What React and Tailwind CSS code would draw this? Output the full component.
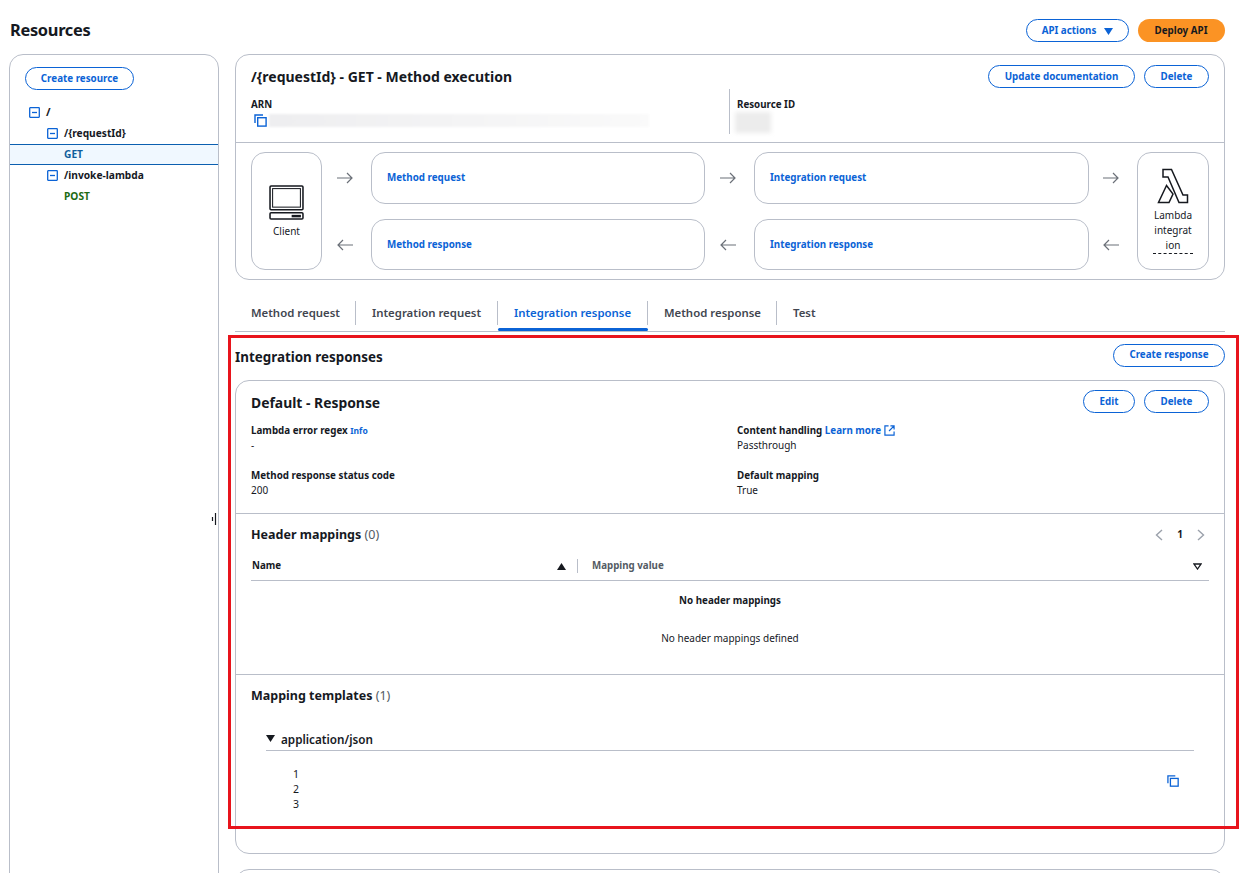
import React from 'react';

const CopyIcon = ({ className }) => (
  <svg viewBox="0 0 13 13" className={className} fill="none" stroke="#0b63d6" strokeWidth="1.4">
    <rect x="3.7" y="3.7" width="8.4" height="8.4" fill="#fff" />
    <path d="M1 9V1h8" />
  </svg>
);

const MinusBox = () => (
  <svg viewBox="0 0 11 11" className="w-[11px] h-[11px] shrink-0" fill="none" stroke="#0b63d6" strokeWidth="1.3">
    <rect x="0.7" y="0.7" width="9.6" height="9.6" rx="0.5" />
    <path d="M3 5.5h5" />
  </svg>
);

const Arrow = ({ left }) => (
  <div className="flex items-center justify-center pr-[4px]">
    <svg viewBox="0 0 16 12" className={'w-[16px] h-[12px] ' + (left ? 'rotate-180' : '')} fill="none" stroke="#6b7078" strokeWidth="1.2">
      <path d="M0 6h15M10 1l5 5-5 5" />
    </svg>
  </div>
);

const Btn = ({ children, className = '' }) => (
  <button className={'h-[23px] pt-px rounded-full border border-[#0b63d6] bg-white text-[#0b63d6] text-[9.8px] font-bold flex items-center justify-center ' + className}>
    {children}
  </button>
);

const Tile = ({ children, className = '' }) => (
  <div className={'rounded-[14px] border border-[#b9bec9] flex items-center pl-[15px] text-[9.8px] font-bold text-[#0b63d6] ' + className}>
    {children}
  </div>
);

const Tab = ({ children, width, active, last }) => (
  <div className={'relative h-[24px] flex items-center pl-[16px] text-[11.4px] font-semibold ' + width + ' ' + (active ? 'text-[#0b63d6]' : 'text-[#424650]')}>
    {children}
    {!last && <span className="absolute right-0 top-0 bottom-0 w-px bg-[#b9bec9]" />}
    {active && <span className="absolute left-0 right-0 -bottom-[6px] h-[3px] rounded-full bg-[#0b63d6]" />}
  </div>
);

const Field = ({ label, value, extra }) => (
  <div className="h-[30px] text-[10px] leading-[15px]">
    <div className="text-[9.8px] font-bold text-[#16191f]">{label} {extra}</div>
    <div className="text-[#16191f]">{value}</div>
  </div>
);

export default function App() {
  return (
    <div className="relative w-[1252px] h-[873px] overflow-hidden bg-white pl-[9px] pr-[27px] font-['Noto_Sans',sans-serif] text-[#16191f]">
      <div className="flex items-center justify-between h-[54px] pb-[6px] pt-[13px]">
        <h1 className="pl-px text-[16.4px] font-bold tracking-[-0.3px]">Resources</h1>
        <div className="flex gap-[9px]">
          <Btn className="w-[103px] gap-[8px]">
            API actions
            <svg viewBox="0 0 9 7" className="w-[9px] h-[7px]"><path d="M0 0h9L4.5 7z" fill="#0b63d6" /></svg>
          </Btn>
          <button className="w-[87px] h-[23px] pt-px pr-px rounded-full bg-[#fb9324] text-[9.8px] font-bold text-[#16191f]">Deploy API</button>
        </div>
      </div>

      <div className="flex gap-[16px] items-start">
        <aside className="relative w-[210px] h-[840px] rounded-[14px] border border-[#b9bec9] pt-[12px]">
          <Btn className="ml-[15px] w-[109px]">Create resource</Btn>
          <div className="mt-[12px] text-[10.2px] font-bold">
            <div className="h-[21px] flex items-center gap-[6px] pl-[19px] text-[11px]"><MinusBox /> /</div>
            <div className="h-[21px] flex items-center gap-[6px] pl-[37px]"><MinusBox /> /{'{requestId}'}</div>
            <div className="h-[21px] flex items-center pl-[54px] bg-[#f0f8ff] border-y border-[#0b5fb0] text-[#0f5e9c]">GET</div>
            <div className="h-[21px] flex items-center gap-[6px] pl-[37px]"><MinusBox /> /invoke-lambda</div>
            <div className="h-[21px] flex items-center pl-[54px] text-[#1d6b13]">POST</div>
          </div>
          <svg viewBox="0 0 6 12" className="absolute right-[1px] top-[458px] w-[6px] h-[12px]" fill="none" stroke="#16191f">
            <path d="M4.5 0v12" strokeWidth="1.2" />
            <path d="M1.5 4v4" strokeWidth="1.2" />
          </svg>
        </aside>

        <main className="w-[990px]">
          <section className="rounded-[14px] border border-[#b9bec9]">
            <div className="h-[88px] px-[15px] border-b border-[#b9bec9] relative">
              <div className="flex justify-between items-start pt-[10px]">
                <h2 className="text-[14px] font-bold leading-[24px]">/{'{requestId}'} - GET - Method execution</h2>
                <div className="flex gap-[9px]">
                  <Btn className="w-[147px]">Update documentation</Btn>
                  <Btn className="w-[65px]">Delete</Btn>
                </div>
              </div>
              <div className="flex mt-[9px]">
                <div className="w-[478px] text-[9.75px] font-bold leading-[14px]">
                  ARN
                  <div className="flex items-center gap-[2px] mt-[2px]">
                    <CopyIcon className="ml-[3px] w-[13px] h-[13px]" />
                    <div className="w-[380px] h-[13px] bg-gradient-to-r from-[#eeeef0] via-[#f4f4f5] to-[#fafafa] blur-[1px]" />
                  </div>
                </div>
                <div className="w-px h-[45px] -mt-[9px] bg-[#b9bec9]" />
                <div className="pl-[7px] text-[9.75px] font-bold leading-[14px]">
                  Resource ID
                  <div className="w-[36px] h-[21px] -ml-[2px] bg-[#ececec] blur-[2px]" />
                </div>
              </div>
            </div>
            <div className="grid grid-cols-[71px_49px_334px_49px_335px_48px_72px] grid-rows-[52px_51px] gap-y-[15px] px-[15px] py-[9px]">
              <div className="row-span-2 rounded-[14px] border border-[#b9bec9] flex flex-col items-center justify-center text-[10px] pt-[2px]">
                <svg viewBox="0 0 34 34" className="w-[35px] h-[35px] mb-[4px]" fill="none" stroke="#16191f">
                  <rect x="1" y="1" width="32" height="23" rx="1" strokeWidth="1.5" />
                  <rect x="3.5" y="3.5" width="27" height="18" strokeWidth="1" />
                  <rect x="1" y="27" width="32" height="6" rx="1" strokeWidth="1.5" />
                  <rect x="22" y="29" width="9" height="2.4" fill="#16191f" stroke="none" />
                </svg>
                Client
              </div>
              <Arrow />
              <Tile>Method request</Tile>
              <Arrow />
              <Tile>Integration request</Tile>
              <Arrow />
              <div className="row-span-2 rounded-[14px] border border-[#b9bec9] flex flex-col items-center pt-[15px] text-[10px] leading-[15px] text-center col-start-7 row-start-1">
                <svg viewBox="0 0 32 36" className="w-[32px] h-[36px] mb-[4px]" fill="none" stroke="#16191f" strokeWidth="1.5" strokeLinejoin="miter">
                  <path d="M6 1.5h8.5L26 27h4.5v7.5H22L11 9H6z" />
                  <path d="M9.5 17.5L1.5 34.5h10.5l4-8.5z" />
                </svg>
                <div className="w-[40px] border-b border-dashed border-[#16191f]">Lambda<br />integrat<br />ion</div>
              </div>
              <Arrow left />
              <Tile className="pt-px">Method response</Tile>
              <Arrow left />
              <Tile className="pt-px">Integration response</Tile>
              <Arrow left />
            </div>
          </section>

          <div className="flex h-[24px] mt-[21px]">
            <Tab width="w-[121px]">Method request</Tab>
            <Tab width="w-[142px]">Integration request</Tab>
            <Tab width="w-[150px]" active>Integration response</Tab>
            <Tab width="w-[129px]">Method response</Tab>
            <Tab width="w-[80px]" last>Test</Tab>
          </div>
          <div className="h-px bg-[#b9bec9] mt-[6px]" />

          <div className="flex justify-between items-center h-[48px] pb-[2px]">
            <h3 className="pt-[4px] text-[13.4px] font-bold">Integration responses</h3>
            <Btn className="w-[112px]">Create response</Btn>
          </div>

          <section className="h-[474px] rounded-[14px] border border-[#b9bec9]">
            <div className="h-[133px] border-b border-[#b9bec9] px-[15px] pt-[9px]">
              <div className="flex justify-between items-start h-[32px]">
                <h3 className="text-[13.9px] font-bold leading-[26px]">Default - Response</h3>
                <div className="flex gap-[9px]">
                  <Btn className="w-[52px]">Edit</Btn>
                  <Btn className="w-[65px]">Delete</Btn>
                </div>
              </div>
              <div className="grid grid-cols-[486px_1fr] gap-y-[15px] mt-[1px]">
                <Field label="Lambda error regex" value="-" extra={<span className="text-[#0b63d6] text-[8.5px]">Info</span>} />
                <Field
                  label="Content handling"
                  value="Passthrough"
                  extra={
                    <span className="inline-flex items-center gap-[3px] text-[#0b63d6]">
                      Learn more
                      <svg viewBox="0 0 12 12" className="w-[11px] h-[11px]" fill="none" stroke="#0b63d6" strokeWidth="1.3">
                        <path d="M5 1H1v10h10V7M7 1h4v4M11 1L5.5 6.5" />
                      </svg>
                    </span>
                  }
                />
                <Field label="Method response status code" value="200" />
                <Field label="Default mapping" value="True" />
              </div>
            </div>

            <div className="h-[161px] border-b border-[#b9bec9] px-[15px]">
              <div className="flex justify-between items-center h-[41px]">
                <h4 className="pt-[2px] text-[12.5px] font-bold">Header mappings <span className="font-normal text-[#545b64]">(0)</span></h4>
                <div className="flex items-center gap-[14px] pr-[4px] text-[10px] font-bold">
                  <svg viewBox="0 0 8 12" className="w-[8px] h-[12px]" fill="none" stroke="#9ba1ab" strokeWidth="1.4"><path d="M7 1L1.5 6 7 11" /></svg>
                  1
                  <svg viewBox="0 0 8 12" className="w-[8px] h-[12px]" fill="none" stroke="#9ba1ab" strokeWidth="1.4"><path d="M1 1l5.5 5L1 11" /></svg>
                </div>
              </div>
              <div className="flex items-center h-[26px] border-b border-[#b9bec9] text-[9.75px] font-bold pb-[3px]">
                <div className="w-[326px] flex items-center justify-between pl-[1px] pr-[11px]">
                  <span>Name</span>
                  <svg viewBox="0 0 9 7" className="w-[9px] h-[7px]"><path d="M0 7h9L4.5 0z" fill="#16191f" /></svg>
                </div>
                <div className="flex-1 flex items-center justify-between border-l border-[#b9bec9] pl-[14px] pr-[7px] h-[14px] text-[#545b64]">
                  <span>Mapping value</span>
                  <svg viewBox="0 0 9 7" className="w-[9px] h-[7px]" fill="none" stroke="#16191f" strokeWidth="1.3"><path d="M1 1h7L4.5 6z" /></svg>
                </div>
              </div>
              <div className="text-center text-[10px] pt-[12px] leading-[15px]">
                <div className="text-[9.8px] font-bold">No header mappings</div>
                <div className="mt-[23px]">No header mappings defined</div>
              </div>
            </div>

            <div className="px-[15px]">
              <div className="flex items-center h-[41px] pt-[2px]">
                <h4 className="text-[12.5px] font-bold">Mapping templates <span className="font-normal text-[#545b64]">(1)</span></h4>
              </div>
              <div className="mx-[15px] mt-[15px] flex items-center gap-[6px] h-[20px] pb-[2px] border-b border-[#b9bec9] text-[11.7px] font-semibold">
                <svg viewBox="0 0 9 7" className="w-[9px] h-[7px] mb-[3px]"><path d="M0 0h9L4.5 7z" fill="#16191f" /></svg>
                application/json
              </div>
              <div className="mx-[15px] flex justify-between items-center pt-[16px] pr-[15px]">
                <div className="pl-[27px] text-[10.5px] leading-[15px]">
                  <div>1</div>
                  <div>2</div>
                  <div>3</div>
                </div>
                <CopyIcon className="w-[12px] h-[12px] mb-[18px]" />
              </div>
            </div>
          </section>

          <section className="h-[40px] mt-[15px] rounded-[14px] border border-[#b9bec9]" />
        </main>
      </div>

      <div className="absolute left-[228px] top-[335px] w-[1011px] h-[494px] border-[3px] border-[#e8141c] pointer-events-none" />
    </div>
  );
}
